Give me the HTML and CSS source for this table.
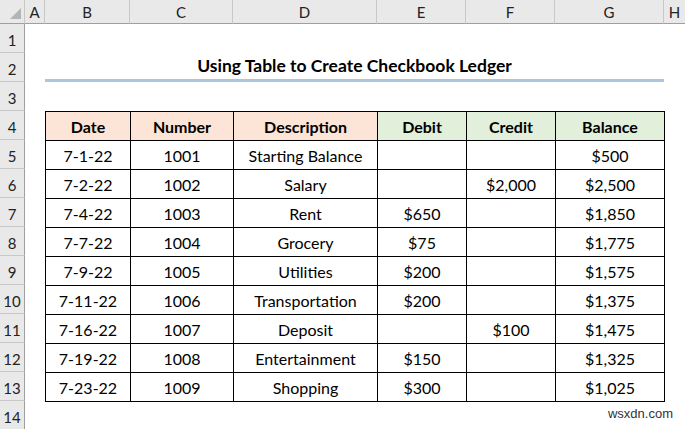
FILE: index.html
```html
<!DOCTYPE html>
<html>
<head>
<meta charset="utf-8">
<link rel="stylesheet" href="styles.css">
</head>
<body>
<div class="sheet">
  <div class="corner"><svg width="14" height="14" viewBox="0 0 14 14"><polygon points="13,2 13,13 2,13" fill="#b4b4b4"/></svg></div>
  <div class="colhead">A</div>
  <div class="colhead">B</div>
  <div class="colhead">C</div>
  <div class="colhead">D</div>
  <div class="colhead">E</div>
  <div class="colhead">F</div>
  <div class="colhead">G</div>
  <div class="colhead last">H</div>

  <div class="rowhead r1">1</div>
  <div class="rowhead r2">2</div>
  <div class="rowhead r3">3</div>
  <div class="rowhead r4">4</div>
  <div class="rowhead r5">5</div>
  <div class="rowhead r6">6</div>
  <div class="rowhead r7">7</div>
  <div class="rowhead r8">8</div>
  <div class="rowhead r9">9</div>
  <div class="rowhead r10">10</div>
  <div class="rowhead r11">11</div>
  <div class="rowhead r12">12</div>
  <div class="rowhead r13">13</div>
  <div class="rowhead r14">14</div>

  <div class="title">Using Table to Create Checkbook Ledger</div>

  <table class="ledger">
    <colgroup>
      <col class="cb"><col class="cc"><col class="cd"><col class="ce"><col class="cf"><col class="cg">
    </colgroup>
    <thead>
      <tr>
        <th class="peach">Date</th><th class="peach">Number</th><th class="peach">Description</th>
        <th class="green">Debit</th><th class="green">Credit</th><th class="green">Balance</th>
      </tr>
    </thead>
    <tbody>
      <tr><td>7-1-22</td><td>1001</td><td>Starting Balance</td><td></td><td></td><td>$500</td></tr>
      <tr><td>7-2-22</td><td>1002</td><td>Salary</td><td></td><td>$2,000</td><td>$2,500</td></tr>
      <tr><td>7-4-22</td><td>1003</td><td>Rent</td><td>$650</td><td></td><td>$1,850</td></tr>
      <tr><td>7-7-22</td><td>1004</td><td>Grocery</td><td>$75</td><td></td><td>$1,775</td></tr>
      <tr><td>7-9-22</td><td>1005</td><td>Utilities</td><td>$200</td><td></td><td>$1,575</td></tr>
      <tr><td>7-11-22</td><td>1006</td><td>Transportation</td><td>$200</td><td></td><td>$1,375</td></tr>
      <tr><td>7-16-22</td><td>1007</td><td>Deposit</td><td></td><td>$100</td><td>$1,475</td></tr>
      <tr><td>7-19-22</td><td>1008</td><td>Entertainment</td><td>$150</td><td></td><td>$1,325</td></tr>
      <tr><td>7-23-22</td><td>1009</td><td>Shopping</td><td>$300</td><td></td><td>$1,025</td></tr>
    </tbody>
  </table>

  <div class="watermark">wsxdn.com</div>
</div>
</body>
</html>
```
FILE: styles.css
```css
html, body {
  margin: 0;
  padding: 0;
  background: #ffffff;
}
body {
  font-family: Lato, "Open Sans", "Liberation Sans", sans-serif;
  color: #000;
  overflow: hidden;
}
.sheet {
  position: relative;
  display: grid;
  grid-template-columns: 25px 20px 85px 103px 144px 89px 89px 109px 21px;
  grid-template-rows: 24px repeat(14, 29px);
  width: 685px;
  height: 430px;
}
.corner {
  grid-column: 1;
  grid-row: 1;
  background: #e9e9e9;
  border-right: 1px solid #c8c8c8;
  border-bottom: 1px solid #9f9f9f;
  box-sizing: border-box;
  display: flex;
  align-items: flex-end;
  justify-content: flex-end;
  padding: 0 2px 3px 0;
}
.colhead {
  grid-row: 1;
  background: #e9e9e9;
  border-right: 1px solid #c8c8c8;
  border-bottom: 1px solid #9f9f9f;
  box-sizing: border-box;
  display: flex;
  align-items: center;
  justify-content: center;
  font-size: 15px;
  color: #222;
  padding-top: 1px;
}
.colhead.last { border-right: none; }
.rowhead {
  grid-column: 1;
  background: #e9e9e9;
  border-right: 1px solid #9f9f9f;
  border-bottom: 1px solid #c8c8c8;
  box-sizing: border-box;
  display: flex;
  align-items: center;
  justify-content: center;
  font-size: 15px;
  color: #222;
  padding-top: 4px;
}
.r1 { grid-row: 2; } .r2 { grid-row: 3; } .r3 { grid-row: 4; } .r4 { grid-row: 5; }
.r5 { grid-row: 6; } .r6 { grid-row: 7; } .r7 { grid-row: 8; } .r8 { grid-row: 9; }
.r9 { grid-row: 10; } .r10 { grid-row: 11; } .r11 { grid-row: 12; } .r12 { grid-row: 13; }
.r13 { grid-row: 14; } .r14 { grid-row: 15; }

.title {
  grid-column: 3 / 9;
  grid-row: 3;
  border-bottom: 3px solid #adc6e0;
  display: flex;
  align-items: flex-end;
  justify-content: center;
  font-weight: bold;
  font-size: 17.5px;
  padding-bottom: 3px;
  box-sizing: border-box;
}

.ledger {
  grid-column: 3 / 9;
  grid-row: 5 / 15;
  align-self: start;
  border-collapse: collapse;
  table-layout: fixed;
  width: 619px;
  font-size: 16px;
}
.cb { width: 85px; } .cc { width: 103px; } .cd { width: 144px; }
.ce { width: 89px; } .cf { width: 89px; } .cg { width: 109px; }
.ledger th, .ledger td {
  border: 1px solid #000;
  height: 29px;
  box-sizing: border-box;
  padding: 1px 0 0 0;
  line-height: 26px;
  text-align: center;
  vertical-align: middle;
  white-space: nowrap;
  overflow: hidden;
}
.ledger th { font-weight: bold; }
.peach { background: #fce4d6; }
.green { background: #e2efda; }

.watermark {
  position: absolute;
  right: 12px;
  bottom: 9px;
  font-family: "Liberation Sans", Arial, sans-serif;
  font-size: 13px;
  color: #333;
}
```
